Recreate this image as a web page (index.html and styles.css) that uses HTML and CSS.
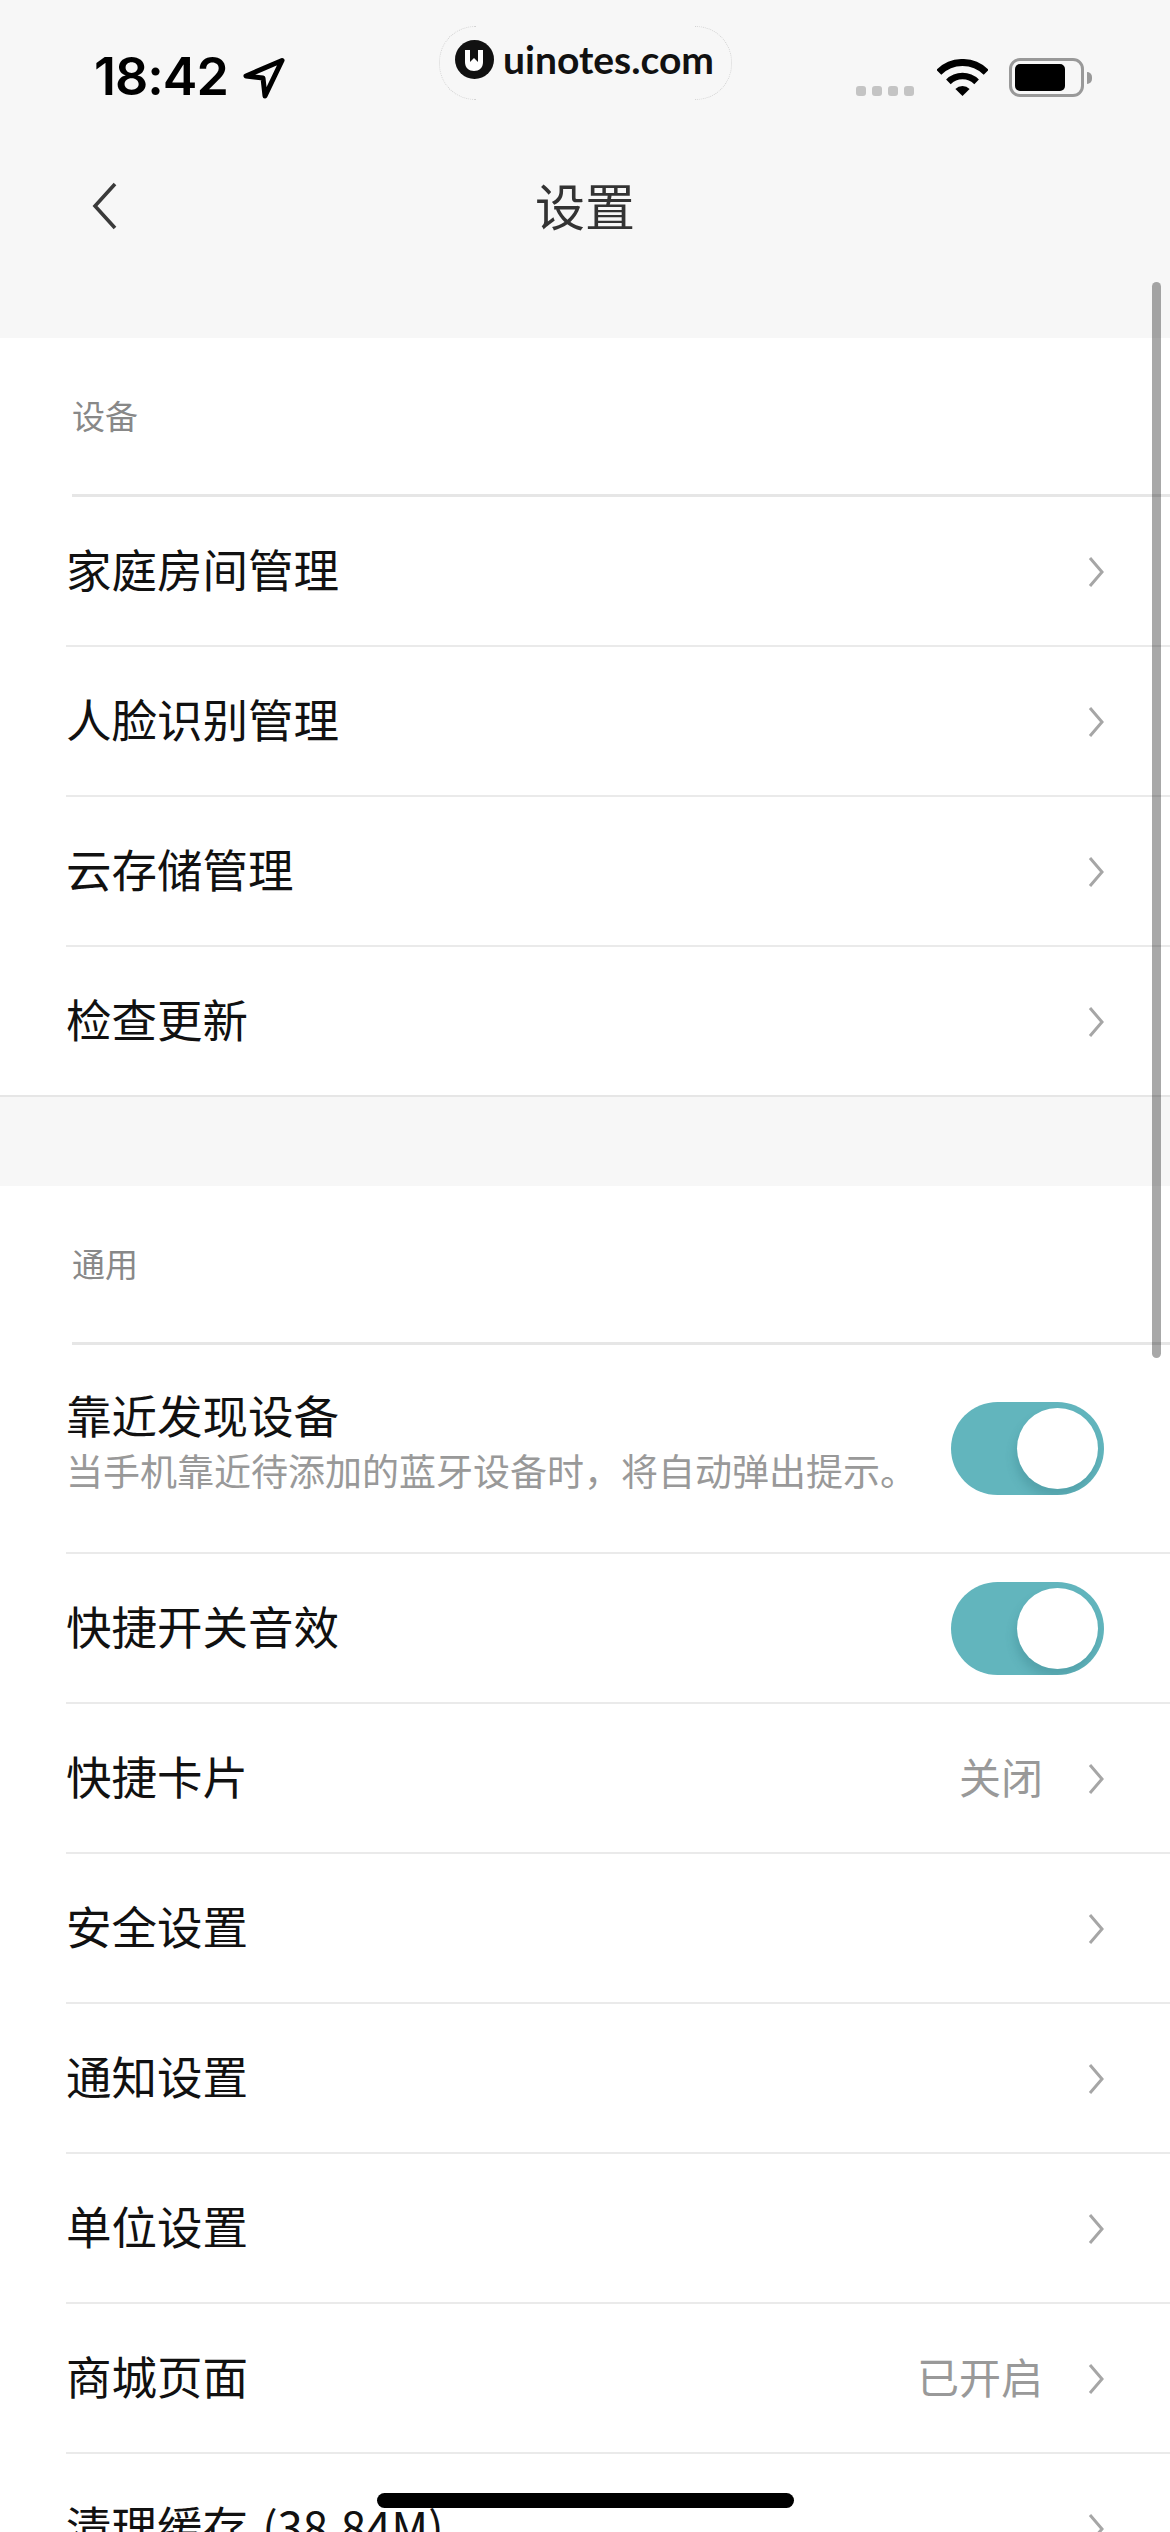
FILE: index.html
```html
<!DOCTYPE html>
<html lang="zh-CN">
<head>
<meta charset="utf-8">
<title>设置</title>
<link rel="stylesheet" href="styles.css">
</head>
<body>
<div class="screen">
  <header class="top">
    <div class="status">
      <div class="time-group">
        <span class="time">18:42</span>
        <svg class="loc" viewBox="0 0 44 44"><path d="M41 4.5 L5 20 L22 22 L24 40 Z"/></svg>
      </div>
      <div class="brand">
        <svg class="brand-logo" viewBox="0 0 39 39"><circle cx="19.5" cy="19.5" r="19.5" fill="#111"/><path d="M10 10 H28 V22 C28 28 24 31 19 31 C14 31 10 28 10 22 Z" fill="#fff"/><path d="M15 9 V22 L19 18 L23 22 V9 Z" fill="#111"/></svg>
        <span class="brand-name">uinotes.com</span>
      </div>
      <div class="status-right">
        <div class="dots"><i></i><i></i><i></i><i></i></div>
        <svg class="wifi" viewBox="-2 0 51 37"><path class="arc a1" d="M-0.2 13.3 A33.5 33.5 0 0 1 47.2 13.3"/><path class="arc a2" d="M9.4 22.9 A20 20 0 0 1 37.6 22.9"/><path d="M23.5 37 L16.4 29.9 A10 10 0 0 1 30.6 29.9 Z"/></svg>
        <div class="battery"><div class="battery-body"><div class="battery-fill"></div></div><div class="battery-tip"></div></div>
      </div>
    </div>
    <nav class="nav">
      <svg class="back" viewBox="0 0 26 50"><path d="M23 3 L3 25 L23 47"/></svg>
      <h1 class="title">设置</h1>
    </nav>
  </header>

  <section class="group group-first">
    <div class="group-label"><span>设备</span></div>
    <div class="row"><span class="row-text">家庭房间管理</span><svg class="chev" viewBox="0 0 16 32"><path d="M2 2 L14 16 L2 30"/></svg></div>
    <div class="row"><span class="row-text">人脸识别管理</span><svg class="chev" viewBox="0 0 16 32"><path d="M2 2 L14 16 L2 30"/></svg></div>
    <div class="row"><span class="row-text">云存储管理</span><svg class="chev" viewBox="0 0 16 32"><path d="M2 2 L14 16 L2 30"/></svg></div>
    <div class="row row-last"><span class="row-text">检查更新</span><svg class="chev" viewBox="0 0 16 32"><path d="M2 2 L14 16 L2 30"/></svg></div>
  </section>

  <section class="group">
    <div class="group-label"><span>通用</span></div>
    <div class="row row-tall">
      <div class="row-stack">
        <span class="row-text">靠近发现设备</span>
        <span class="row-sub">当手机靠近待添加的蓝牙设备时，将自动弹出提示。</span>
      </div>
      <div class="toggle"><div class="knob"></div></div>
    </div>
    <div class="row"><span class="row-text">快捷开关音效</span><div class="toggle"><div class="knob"></div></div></div>
    <div class="row"><span class="row-text">快捷卡片</span><span class="row-value">关闭</span><svg class="chev" viewBox="0 0 16 32"><path d="M2 2 L14 16 L2 30"/></svg></div>
    <div class="row"><span class="row-text">安全设置</span><svg class="chev" viewBox="0 0 16 32"><path d="M2 2 L14 16 L2 30"/></svg></div>
    <div class="row"><span class="row-text">通知设置</span><svg class="chev" viewBox="0 0 16 32"><path d="M2 2 L14 16 L2 30"/></svg></div>
    <div class="row"><span class="row-text">单位设置</span><svg class="chev" viewBox="0 0 16 32"><path d="M2 2 L14 16 L2 30"/></svg></div>
    <div class="row"><span class="row-text">商城页面</span><span class="row-value">已开启</span><svg class="chev" viewBox="0 0 16 32"><path d="M2 2 L14 16 L2 30"/></svg></div>
    <div class="row"><span class="row-text">清理缓存 (38.84M)</span><svg class="chev" viewBox="0 0 16 32"><path d="M2 2 L14 16 L2 30"/></svg></div>
  </section>

  <div class="scrollbar"></div>
  <div class="home"></div>
</div>
</body>
</html>
```
FILE: styles.css
```css
* { box-sizing: border-box; }
html, body { margin: 0; padding: 0; height: 2532px; overflow: hidden; }
body { font-family: "Noto Sans CJK SC", "Noto Sans", sans-serif; background: #f7f7f7; }
.screen { position: relative; width: 1170px; height: 2532px; overflow: hidden; background: #f7f7f7; }

.top { height: 338px; }
.status { height: 154px; padding-left: 94px; display: flex; align-items: flex-start; position: relative; }
.time-group { display: flex; align-items: flex-start; width: 345px; padding-top: 46px; }
.time { font-family: Inter, Roboto, sans-serif; font-weight: 600; font-size: 52px; line-height: 62px; letter-spacing: -1px; color: #000; }
.loc { width: 44px; height: 44px; margin: 10px 0 0 13px; }
.loc path { fill: none; stroke: #000; stroke-width: 5; stroke-linejoin: round; }

.brand { position: relative; width: 293px; height: 72px; margin-top: 26px; display: flex; align-items: center; padding-left: 16px; gap: 9px; flex: none; }
.brand::before, .brand::after { content: ""; position: absolute; top: 0; width: 36px; height: 72px; border: 1px dotted #d2d2d2; }
.brand::before { left: 0; border-right: 0; border-radius: 36px 0 0 36px; }
.brand::after { right: 0; border-left: 0; border-radius: 0 36px 36px 0; }
.brand-logo { width: 39px; height: 39px; margin-top: -5px; flex: none; }
.brand-name { font-family: Lato, sans-serif; font-weight: 700; font-size: 39px; line-height: 40px; color: #111; margin-top: -7px; white-space: nowrap; }

.status-right { flex: 1; display: flex; align-items: flex-start; margin-left: 124px; position: relative; }
.dots { display: flex; gap: 6px; margin-top: 86px; }
.dots i { display: block; width: 10px; height: 10px; border-radius: 3px; background: #c4c4c4; }
.wifi { width: 51px; height: 37px; margin: 59px 0 0 23px; flex: none; }
.wifi path { fill: #000; }
.wifi path.arc { fill: none; stroke: #000; }
.wifi path.a1 { stroke-width: 7; }
.wifi path.a2 { stroke-width: 6.5; }
.battery { display: flex; align-items: center; margin: 58px 0 0 21px; }
.battery-body { width: 75px; height: 39px; border: 3px solid #999; border-radius: 11px; padding: 3px; }
.battery-fill { width: 50px; height: 100%; background: #000; border-radius: 5px; }
.battery-tip { width: 5px; height: 12px; margin-left: 3px; background: #999; border-radius: 0 6px 6px 0; }

.nav { position: relative; height: 100px; display: flex; align-items: center; justify-content: center; }
.back { position: absolute; left: 92px; top: 27px; width: 26px; height: 50px; }
.back path { fill: none; stroke: #3a3a3a; stroke-width: 3.6; }
.title { margin: 0; font-size: 50px; line-height: 60px; font-weight: 400; color: #333; }

.group { background: #fff; }
.group-first { border-bottom: 2px solid #e6e6e6; margin-bottom: 89px; }
.group-first .row-last { border-bottom: 0; height: 148px; }
.group-label { height: 159px; margin-left: 72px; padding-bottom: 3px; border-bottom: 3px solid #e6e6e6; display: flex; align-items: center; font-size: 33px; line-height: 40px; color: #888; }

.row { height: 150px; margin-left: 66px; padding-right: 66px; border-bottom: 2px solid #eaeaea; display: flex; align-items: center; }
.row-tall { height: 209px; }
.row-text { flex: 1; font-size: 45.5px; line-height: 56px; margin-top: -6px; color: #111; white-space: nowrap; word-spacing: 4px; }
.row-stack { flex: 1; display: flex; flex-direction: column; margin-top: -20px; }
.row-stack .row-text { flex: none; margin-top: 0; }
.row-sub { font-size: 37px; line-height: 44px; margin-top: 6px; color: #999; white-space: nowrap; }
.row-value { font-size: 42px; line-height: 56px; margin-top: -5px; color: #999; margin-right: 45px; }
.chev { width: 16px; height: 32px; flex: none; margin-top: 1px; }
.chev path { fill: none; stroke: #a6a6a6; stroke-width: 3; }

.toggle { position: relative; width: 153px; height: 93px; flex: none; border-radius: 47px; background: #62b5bd; overflow: hidden; }
.knob { position: absolute; left: 66px; top: 6px; width: 81px; height: 81px; border-radius: 50%; background: #fff; box-shadow: -2px 8px 10px rgba(50, 120, 130, .3); }

.scrollbar { position: absolute; left: 1152px; top: 282px; width: 9px; height: 1076px; border-radius: 5px; background: rgba(0, 0, 0, .34); }
.home { position: absolute; left: 377px; top: 2493px; width: 417px; height: 15px; border-radius: 8px; background: #000; }
```
